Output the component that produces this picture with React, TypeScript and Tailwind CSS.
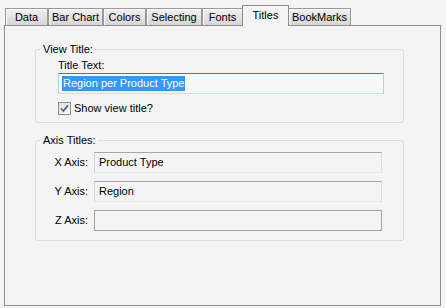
import React from "react";

const tabs = [
  { label: "Data", w: "w-[43px]" },
  { label: "Bar Chart", w: "w-[55px]" },
  { label: "Colors", w: "w-[43px]" },
  { label: "Selecting", w: "w-[56px]" },
  { label: "Fonts", w: "w-[41px]" },
  { label: "Titles", w: "w-[47px]", active: true },
  { label: "BookMarks", w: "w-[63px]" },
];

function Tab({ label, w, active }: { label: string; w: string; active?: boolean }) {
  if (active) {
    return (
      <div
        className={`${w} relative z-10 -mx-[1px] -mb-[1px] h-[21px] border border-b-0 border-[#8d8d8d] bg-[#f4f4f4] flex justify-center pt-[2px] leading-[14px]`}
      >
        {label}
      </div>
    );
  }
  return (
    <div
      className={`${w} h-[17px] border border-b-0 border-[#9a9a9a] bg-gradient-to-b from-[#f0f0f0] to-[#d6d6d6] shadow-[inset_1px_1px_0_#fbfbfb] flex justify-center pt-[2px] leading-[13px]`}
    >
      {label}
    </div>
  );
}

function AxisRow({ label, value, dark }: { label: string; value: string; dark?: boolean }) {
  return (
    <div className="flex items-center">
      <div className="w-[53px] text-right pr-[1px]">{label}</div>
      <div
        className={
          dark
            ? "ml-[5px] w-[288px] h-[21px] border border-[#a3a3a3] bg-[#f4f4f4] pl-[4px] leading-[19px]"
            : "ml-[5px] w-[288px] h-[21px] border border-t-[#a8a8a8] border-l-[#d0d0d0] border-r-[#e0e0e0] border-b-[#e8e8e8] bg-[#f4f4f4] pl-[4px] leading-[19px]"
        }
      >
        {value}
      </div>
    </div>
  );
}

export default function App() {
  return (
    <div
      className="w-[446px] h-[308px] bg-[#f4f4f4] pt-[5px] text-[11px] text-black overflow-hidden"
      style={{ fontFamily: '"Liberation Sans", Arial, sans-serif' }}
    >
      <div className="flex items-end h-[20px] pl-[5px]">
        {tabs.map((t) => (
          <Tab key={t.label} {...t} />
        ))}
      </div>
      <div className="ml-[4px] w-[437px] h-[281px] border border-[#8d8d8d] bg-[#f4f4f4] pl-[30px] pt-[16px]">
        <fieldset className="w-[369px] border border-[#d5dfe5] rounded-[3px] pt-[3px] pb-[7px]">
          <legend className="ml-[5px] px-[2px] leading-[14px]">View Title:</legend>
          <div className="pl-[22px]">
            <div className="leading-[13px]">Title Text:</div>
            <div className="mt-[1px] w-[326px] h-[21px] border border-t-[#3d7bad] border-l-[#b5cfe7] border-r-[#b5cfe7] border-b-[#c6dcef] bg-[#f8f8f8] pl-[3px] flex items-center">
              <span className="bg-[#3399ff] text-white leading-[15px] pl-[1px] pr-[1px]">Region per Product Type</span>
            </div>
            <div className="mt-[8px] flex items-center">
              <div className="w-[13px] h-[13px] border border-[#8f8f8f] bg-gradient-to-br from-[#dcdcdc] to-[#fbfbfb] flex items-center justify-center">
                <svg width="9" height="9" viewBox="0 0 9 9">
                  <path d="M1 4.5 L3.4 7 L8 1.2" fill="none" stroke="#4a5f97" strokeWidth="1.8" />
                </svg>
              </div>
              <span className="ml-[3px] leading-[13px]">Show view title?</span>
            </div>
          </div>
        </fieldset>
        <fieldset className="mt-[10px] w-[369px] border border-[#d5dfe5] rounded-[3px] pt-[5px] pb-[9px] flex flex-col gap-[8px]">
          <legend className="ml-[5px] px-[2px] leading-[14px]">Axis Titles:</legend>
          <AxisRow label="X Axis:" value="Product Type" />
          <AxisRow label="Y Axis:" value="Region" />
          <AxisRow label="Z Axis:" value="" dark />
        </fieldset>
      </div>
    </div>
  );
}
